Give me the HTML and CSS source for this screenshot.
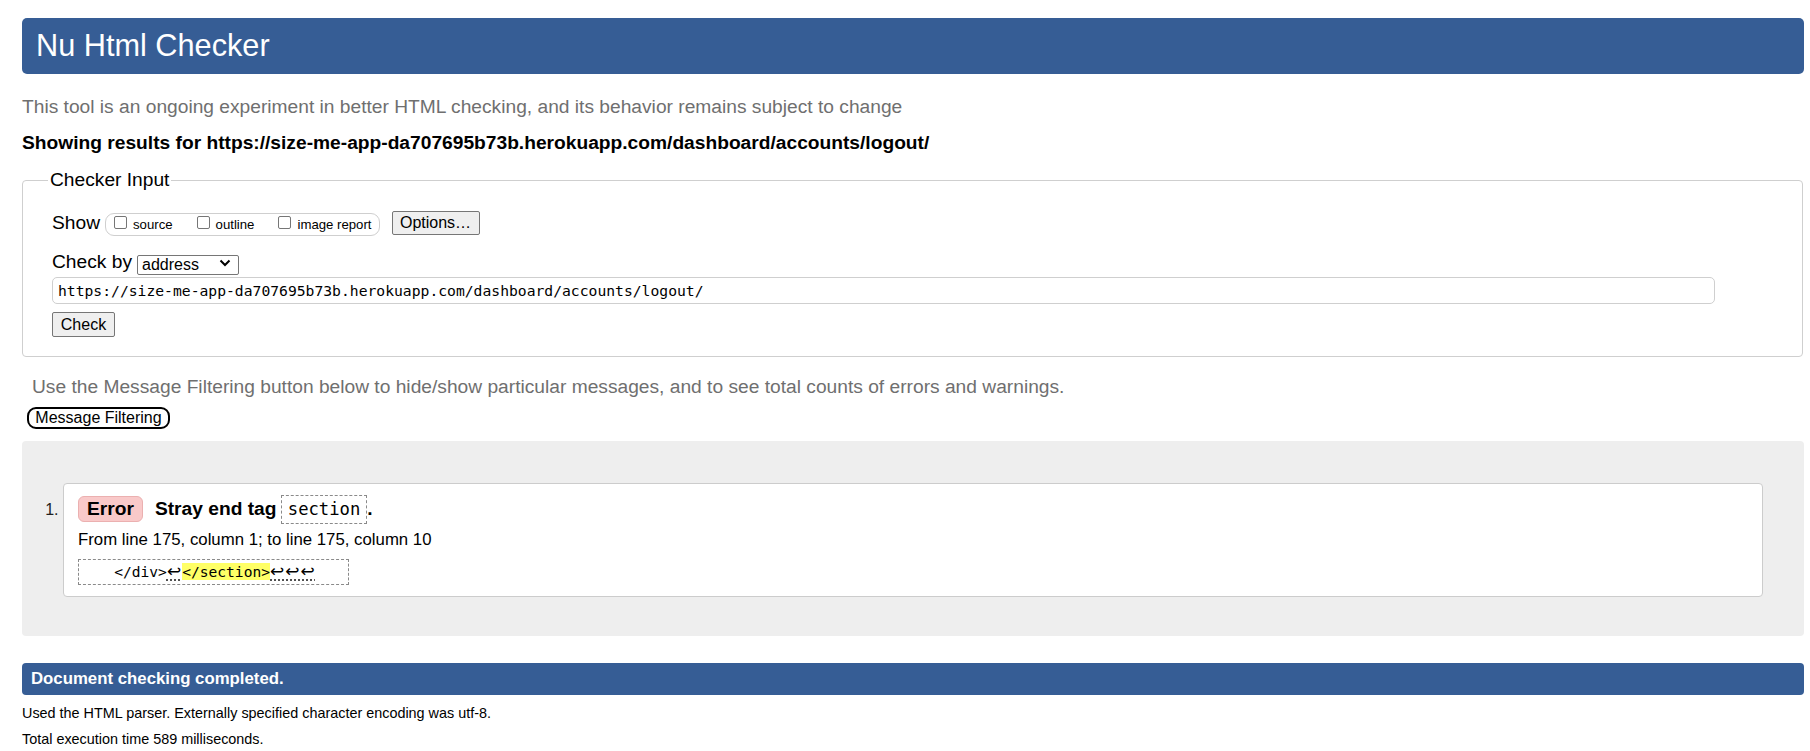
FILE: index.html
```html
<!DOCTYPE html>
<html lang="en">
<head>
<meta charset="utf-8">
<title>Nu Html Checker</title>
<link rel="stylesheet" href="styles.css">
</head>
<body>
<h1 class="title">Nu Html Checker</h1>
<p class="intro">This tool is an ongoing experiment in better HTML checking, and its behavior remains subject to change</p>
<p class="results-for">Showing results for https://size-me-app-da707695b73b.herokuapp.com/dashboard/accounts/logout/</p>

<form class="checker-form">
  <fieldset class="checker">
    <legend class="checker-legend">Checker Input</legend>
    <div class="show-row">
      <span class="row-label">Show</span>
      <span class="show-group">
        <label class="opt"><input type="checkbox" class="cb"><span class="opt-text">source</span></label>
        <label class="opt"><input type="checkbox" class="cb"><span class="opt-text">outline</span></label>
        <label class="opt last"><input type="checkbox" class="cb"><span class="opt-text">image report</span></label>
      </span>
      <button type="button" class="btn options-btn">Options…</button>
    </div>
    <div class="checkby-row">
      <span class="row-label">Check by</span>
      <span class="select-wrap">
        <select class="select"><option>address</option></select>
        <svg class="chev" width="12" height="8" viewBox="0 0 12 8" aria-hidden="true"><path d="M1.5 1.5 L6 6 L10.5 1.5" fill="none" stroke="#000" stroke-width="2"/></svg>
      </span>
    </div>
    <input class="url" type="text" value="https://size-me-app-da707695b73b.herokuapp.com/dashboard/accounts/logout/">
    <button type="button" class="btn check-btn">Check</button>
  </fieldset>
</form>

<p class="filter-note">Use the Message Filtering button below to hide/show particular messages, and to see total counts of errors and warnings.</p>
<button type="button" class="filter-btn">Message Filtering</button>

<div class="results">
  <ol class="messages">
    <li class="msg">
      <p class="msg-line"><strong class="badge">Error</strong><span class="msg-text">Stray end tag <code class="tag">section</code>.</span></p>
      <p class="location">From line 175, column 1; to line 175, column 10</p>
      <p class="extract"><code class="extract-code">    &lt;/div&gt;<span class="lf">↩</span><b class="hl">&lt;/section&gt;</b><span class="lf">↩↩↩</span></code></p>
    </li>
  </ol>
</div>

<p class="done">Document checking completed.</p>
<p class="meta">Used the HTML parser. Externally specified character encoding was utf-8.</p>
<p class="meta">Total execution time 589 milliseconds.</p>
</body>
</html>
```

FILE: styles.css
```css
* { box-sizing: border-box; }
html, body { margin: 0; padding: 0; }
body {
  font-family: "Liberation Sans", Arial, sans-serif;
  font-size: 19.2px;
  line-height: 24px;
  color: #000;
  background: #fff;
  padding: 18px 6px 0 22px;
}
p { margin: 0; }

.title {
  margin: 0;
  height: 56px;
  line-height: 56px;
  padding: 0 14px;
  font-size: 30.7px;
  font-weight: normal;
  color: #fff;
  background: #365d95;
  border-radius: 5px;
}
.intro { margin-top: 21px; color: #6f6f6f; }
.results-for { margin-top: 12px; font-weight: bold; }

.checker-form { margin: 13px 1px 0 0; }
.checker {
  margin: 0;
  border: 1px solid #cfcfcf;
  border-radius: 4px;
  padding: 0 87px 19px 29px;
  min-width: 0;
}
.checker-legend {
  padding: 0 2px;
  margin-left: -4px;
  line-height: 24px;
}
.row-label { margin-right: 5px; }

.show-row {
  display: flex;
  align-items: center;
  height: 26px;
  margin-top: 18px;
}
.show-group {
  display: flex;
  align-items: center;
  height: 23px;
  border: 1px solid #cfcfcf;
  border-radius: 9px;
  padding: 0 7px 0 8px;
  margin-top: 2px;
}
.opt {
  display: flex;
  align-items: center;
  margin-right: 24px;
  font-size: 13.2px;
  line-height: 16px;
}
.opt.last { margin-right: 0; }
.cb {
  appearance: none;
  -webkit-appearance: none;
  width: 13px;
  height: 13px;
  margin: 0 6px 0 0;
  border: 1px solid #767676;
  border-radius: 2px;
  background: #fff;
  position: relative;
  top: -2px;
}
.opt-text { padding-top: 2px; }

.btn {
  font-family: "Liberation Sans", Arial, sans-serif;
  font-size: 16px;
  line-height: 18px;
  color: #000;
  background: #efefef;
  border: 1px solid #767676;
  border-radius: 2px;
  padding: 0;
}
.options-btn {
  margin-left: 12px;
  width: 88px;
  height: 24px;
}

.checkby-row {
  display: flex;
  align-items: center;
  height: 24px;
  margin-top: 14px;
}
.select-wrap {
  position: relative;
  display: inline-block;
  width: 102px;
  height: 20px;
}
.select {
  appearance: none;
  -webkit-appearance: none;
  width: 102px;
  height: 20px;
  margin: 0;
  padding: 0 0 0 4px;
  font-family: "Liberation Sans", Arial, sans-serif;
  font-size: 16px;
  line-height: 18px;
  color: #000;
  background: #fff;
  border: 1px solid #767676;
  border-radius: 2px;
}
.chev {
  position: absolute;
  right: 8px;
  top: 7px;
  pointer-events: none;
}

.url {
  display: block;
  width: 100%;
  height: 27px;
  margin: 3px 0 0;
  padding: 0 5px;
  font-family: "DejaVu Sans Mono", "Liberation Mono", monospace;
  font-size: 14.7px;
  color: #000;
  border: 1px solid #cfcfcf;
  border-radius: 5px;
  background: #fff;
}
.check-btn {
  display: block;
  margin-top: 8px;
  width: 63px;
  height: 25px;
}

.filter-note {
  margin-top: 18px;
  padding-left: 10px;
  color: #6f6f6f;
}
.filter-btn {
  display: block;
  margin: 8px 0 0 5px;
  width: 143px;
  height: 22px;
  padding: 0;
  font-family: "Liberation Sans", Arial, sans-serif;
  font-size: 16px;
  line-height: 16px;
  color: #000;
  background: #fff;
  border: 2px solid #000;
  border-radius: 9px;
}

.results {
  margin-top: 12px;
  height: 195px;
  background: #eee;
  border-radius: 4px;
  padding: 42px 41px 39px 41px;
}
.messages { margin: 0; padding: 0; }
.msg {
  font-size: 16.8px;
  background: #fff;
  border: 1px solid #ccc;
  border-radius: 4px;
  padding: 10px 15px 11px 14px;
}
.msg::marker { font-size: 16px; color: #222; }
.msg-line {
  display: flex;
  align-items: center;
  height: 30px;
}
.badge {
  display: inline-block;
  height: 26px;
  line-height: 24px;
  padding: 0 8px;
  font-size: 19.2px;
  background: #f9c9c9;
  border: 1px solid #ebb0b0;
  border-radius: 6px;
}
.msg-text {
  margin-left: 12px;
  font-size: 19.2px;
  font-weight: bold;
  display: flex;
  align-items: center;
  white-space: pre;
}
.tag {
  display: inline-block;
  height: 29px;
  line-height: 27px;
  padding: 0 6px;
  margin-left: -1px;
  font-family: "DejaVu Sans Mono", "Liberation Mono", monospace;
  font-size: 17.2px;
  font-weight: normal;
  border: 1px dashed #8a8a8a;
  background: #fff;
}
.location {
  margin-top: 5px;
  height: 22px;
  line-height: 22px;
}
.extract { margin-top: 8px; }
.extract-code {
  display: inline-block;
  height: 26px;
  line-height: 24px;
  padding: 0 32px 0 0;
  font-family: "DejaVu Sans Mono", "Liberation Mono", monospace;
  font-size: 14.6px;
  white-space: pre;
  border: 1px dashed #8a8a8a;
}
.lf {
  font-family: "DejaVu Sans", sans-serif;
  font-size: 17px;
  line-height: 20px;
  letter-spacing: 1px;
  text-decoration: underline dotted #333;
  text-underline-offset: 3px;
}
.hl {
  font-weight: normal;
  background: #ffff66;
}

.done {
  margin-top: 27px;
  height: 32px;
  line-height: 32px;
  padding-left: 9px;
  font-size: 16.8px;
  font-weight: bold;
  color: #fff;
  background: #365d95;
  border-radius: 4px;
}
.meta {
  font-size: 14.4px;
  line-height: 26px;
}
.done + .meta { margin-top: 5px; }
```
